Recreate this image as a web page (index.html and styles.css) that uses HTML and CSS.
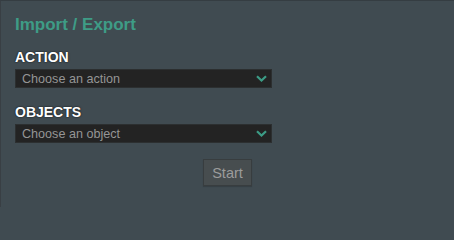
FILE: index.html
```html
<!DOCTYPE html>
<html>
<head>
<meta charset="utf-8">
<link rel="stylesheet" href="styles.css">
</head>
<body>
<div class="panel">
  <h1 class="title">Import / Export</h1>
  <div class="field">
    <div class="label">ACTION</div>
    <div class="select">
      <span class="placeholder">Choose an action</span>
      <svg class="chev" width="11" height="7" viewBox="0 0 11 7"><path d="M1 1.2 L5.5 5.5 L10 1.2" fill="none" stroke="#3c9c86" stroke-width="2.2"/></svg>
    </div>
  </div>
  <div class="field">
    <div class="label">OBJECTS</div>
    <div class="select">
      <span class="placeholder">Choose an object</span>
      <svg class="chev" width="11" height="7" viewBox="0 0 11 7"><path d="M1 1.2 L5.5 5.5 L10 1.2" fill="none" stroke="#3c9c86" stroke-width="2.2"/></svg>
    </div>
  </div>
  <div class="actions">
    <button class="btn">Start</button>
  </div>
</div>
</body>
</html>
```
FILE: styles.css
```css
html, body {
  margin: 0;
  padding: 0;
  background: #404b51;
}
body {
  width: 454px;
  height: 207px;
  font-family: "Liberation Sans", Arial, sans-serif;
}
.panel {
  box-sizing: border-box;
  width: 454px;
  height: 207px;
  border-top: 1px solid #353d42;
  border-left: 1px solid #393f44;
  background: #404b51;
  padding: 14px 14px 0 14px;
  display: flex;
  flex-direction: column;
}
.title {
  margin: 0;
  font-size: 17px;
  line-height: 20px;
  font-weight: bold;
  color: #3e9c86;
}
.field {
  margin-top: 14px;
  width: 257px;
}
.field + .field {
  margin-top: 16px;
}
.label {
  font-size: 14px;
  line-height: 17px;
  font-weight: bold;
  color: #ffffff;
  text-shadow: 0 0 1px #1a1f22, 0 0 2px #1a1f22;
  margin-bottom: 3px;
}
.select {
  box-sizing: border-box;
  height: 19px;
  background: #232323;
  border: 1px solid #2c2f30;
  display: flex;
  align-items: center;
  justify-content: space-between;
  padding: 0 4px 0 6px;
}
.placeholder {
  font-size: 12.6px;
  color: #959595;
}
.chev {
  display: block;
}
.actions {
  display: flex;
  justify-content: center;
  margin-top: 16px;
}
.btn {
  box-sizing: border-box;
  width: 49px;
  height: 27px;
  background: #474d4f;
  border: 1px solid #383d3f;
  color: #9c9c9c;
  font-family: "Liberation Sans", Arial, sans-serif;
  font-size: 14.5px;
  padding: 0;
  box-shadow: 0 1px 1px rgba(0,0,0,0.15);
}
```
